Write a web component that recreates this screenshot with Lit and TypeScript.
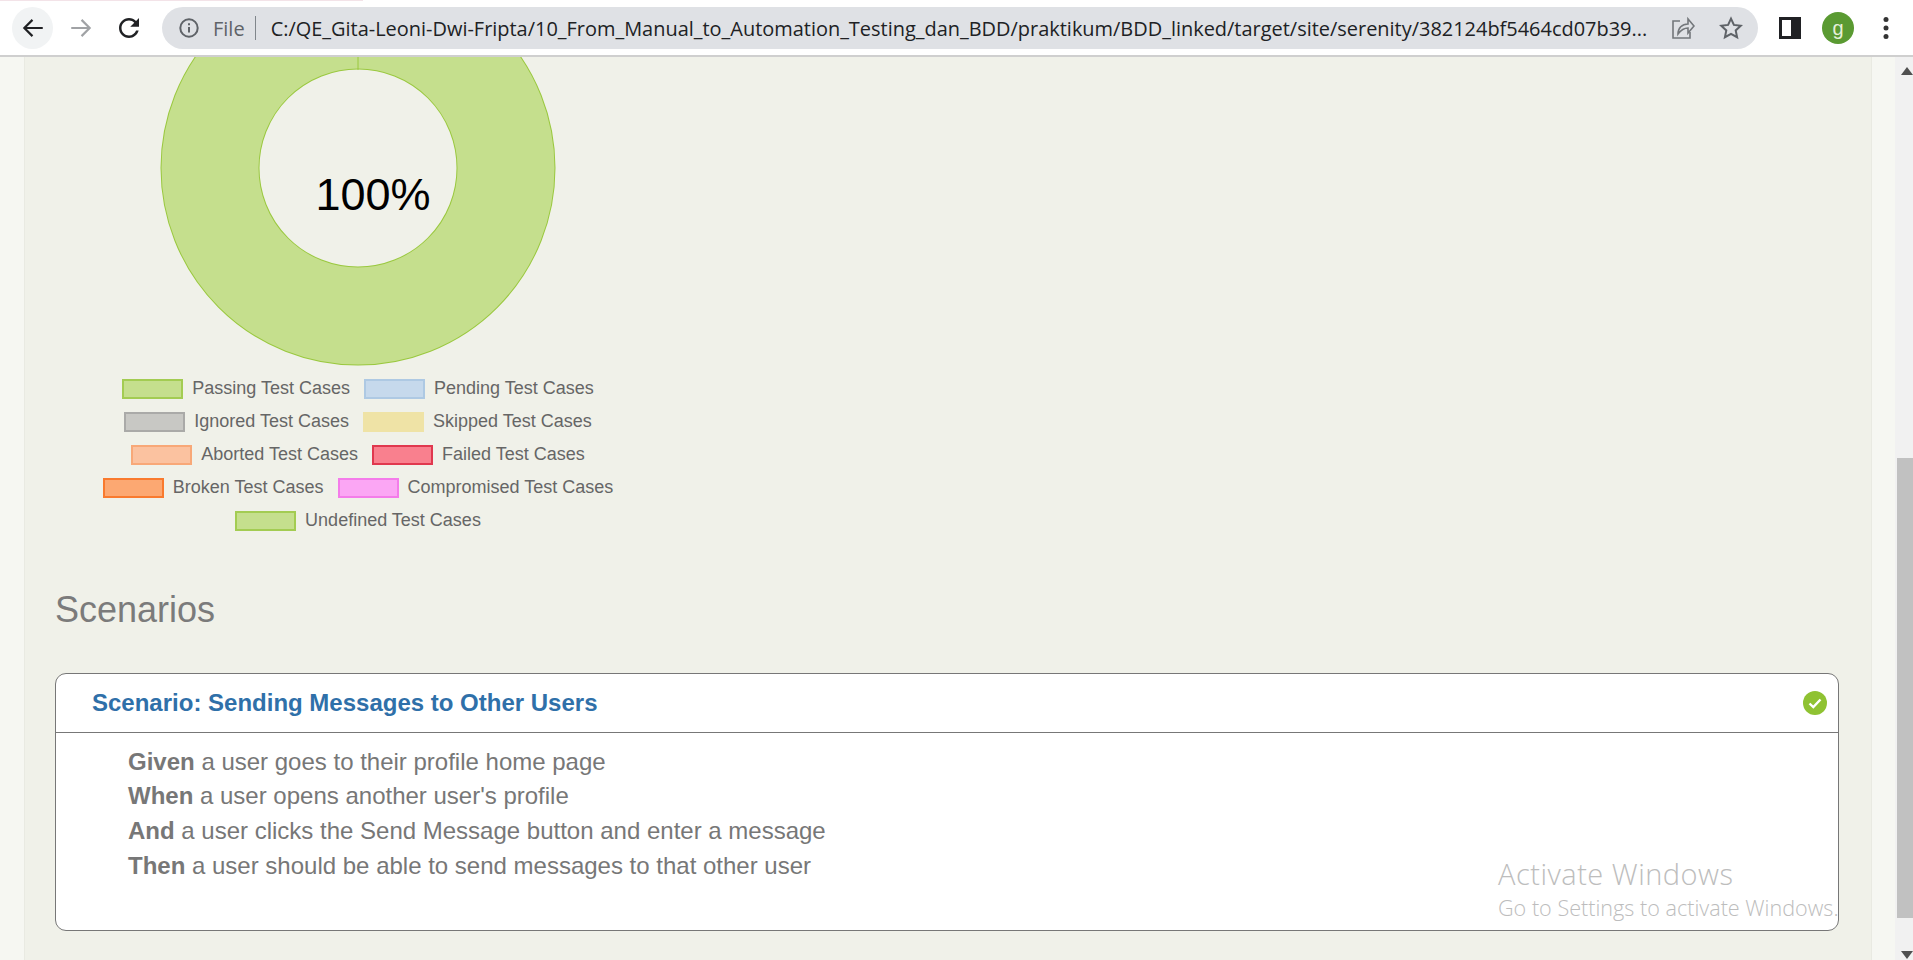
import { LitElement, css, html } from 'lit';
import { customElement } from 'lit/decorators.js';

const LEGEND = [
  [
    { label: 'Passing Test Cases', fill: '#c5df8d', line: '#a3cc52' },
    { label: 'Pending Test Cases', fill: '#c6d9ec', line: '#aec9e3' },
  ],
  [
    { label: 'Ignored Test Cases', fill: '#c8c8c4', line: '#aaaaa8' },
    { label: 'Skipped Test Cases', fill: '#efe3a6', line: '#efe3a6' },
  ],
  [
    { label: 'Aborted Test Cases', fill: '#fbc2a0', line: '#f8a878' },
    { label: 'Failed Test Cases', fill: '#f9808e', line: '#e0384e' },
  ],
  [
    { label: 'Broken Test Cases', fill: '#fca872', line: '#f97a2e' },
    { label: 'Compromised Test Cases', fill: '#fba6f4', line: '#f47cea' },
  ],
  [{ label: 'Undefined Test Cases', fill: '#c5df8d', line: '#a3cc52' }],
];

const STEPS = [
  ['Given', 'a user goes to their profile home page'],
  ['When', "a user opens another user's profile"],
  ['And', 'a user clicks the Send Message button and enter a message'],
  ['Then', 'a user should be able to send messages to that other user'],
];

const URL =
  'C:/QE_Gita-Leoni-Dwi-Fripta/10_From_Manual_to_Automation_Testing_dan_BDD/praktikum/BDD_linked/target/site/serenity/382124bf5464cd07b39...';

@customElement('app-root')
export class AppRoot extends LitElement {
  static override styles = css`
    :host {
      display: flex;
      flex-direction: column;
      position: relative;
      width: 1913px;
      height: 960px;
      overflow: hidden;
      font-family: 'Liberation Sans', Arial, sans-serif;
      background: #fff;
    }
    .tab-strip {
      width: 363px;
      height: 1px;
      background: #f3e3e8;
    }
    .toolbar {
      display: flex;
      align-items: center;
      height: 54px;
      padding-left: 12px;
      background: #fff;
      border-bottom: 2px solid #cfcfcf;
      flex: none;
    }
    .nav {
      display: flex;
      gap: 7px;
      margin-right: 13px;
    }
    .nav-btn {
      display: flex;
      align-items: center;
      justify-content: center;
      width: 41px;
      height: 42px;
      border-radius: 50%;
    }
    .nav-btn.active {
      background: #f1f3f4;
    }
    .omnibox {
      display: flex;
      align-items: center;
      width: 1596px;
      height: 42px;
      box-sizing: border-box;
      padding: 0 15px 0 17px;
      border-radius: 21px;
      background: #dfe1e5;
      font-family: 'Open Sans', sans-serif;
      font-size: 20px;
      color: #202124;
    }
    .file {
      margin-left: 14px;
      color: #5f6368;
    }
    .sep {
      width: 1px;
      height: 24px;
      margin: 0 15px 0 10px;
      background: #80868b;
    }
    .url {
      flex: 1;
      min-width: 0;
      font-size: 19.95px;
      white-space: nowrap;
    }
    .omni-icon {
      margin-left: 24px;
      flex: none;
      display: block;
    }
    .actions {
      display: flex;
      gap: 16px;
      margin-left: 16px;
    }
    .action {
      display: flex;
      align-items: center;
      justify-content: center;
      width: 32px;
      height: 32px;
    }
    .avatar {
      border-radius: 50%;
      background: #5a9a32;
      color: #e6f0d8;
      font-family: 'Liberation Sans', Arial, sans-serif;
      font-size: 20px;
      line-height: 28px;
    }
    .page {
      display: flex;
      flex: 1;
      min-height: 0;
      background: #f6f7f2;
    }
    .gutter-left {
      width: 24px;
      flex: none;
    }
    .gutter-right {
      width: 24px;
      flex: none;
      border-left: 1px solid #e9eae2;
      box-sizing: border-box;
    }
    main {
      flex: 1;
      min-width: 0;
      padding: 0 32px 0 30px;
      background: #f0f1e9;
      border-left: 1px solid #e9eae2;
      box-sizing: border-box;
    }
    .chart {
      width: 606px;
    }
    .donut {
      display: block;
    }
    .donut text {
      font-family: 'Liberation Sans', Arial, sans-serif;
      font-size: 45px;
      fill: #000;
    }
    .legend {
      display: flex;
      flex-direction: column;
      align-items: center;
      margin-top: 5px;
      color: #666;
      font-size: 18px;
    }
    .legend-row {
      display: flex;
      align-items: center;
      gap: 14px;
      height: 33px;
    }
    .legend-item {
      display: flex;
      align-items: center;
      gap: 9px;
    }
    .swatch {
      width: 61px;
      height: 20px;
      box-sizing: border-box;
      border-width: 2px;
      border-style: solid;
    }
    h2 {
      margin: 53px 0 43px;
      font-size: 36px;
      font-weight: 400;
      line-height: 1.1;
      color: #7b7b7b;
    }
    .card {
      background: #fff;
      border: 1px solid #777;
      border-radius: 11px;
    }
    .card-head {
      display: flex;
      align-items: center;
      justify-content: space-between;
      height: 58px;
      padding: 0 11px 0 36px;
      border-bottom: 1px solid #777;
    }
    .card-title {
      color: #2f70a9;
      font-size: 24px;
      font-weight: 700;
    }
    .card-body {
      padding: 12px 0 46.4px 72px;
      color: #777;
      font-size: 24px;
      line-height: 34.7px;
    }
    .scrollbar {
      display: flex;
      flex-direction: column;
      width: 18px;
      flex: none;
      background: #f1f1f1;
    }
    .arrow {
      display: block;
      margin: 10px 0 0 6px;
    }
    .thumb {
      height: 460px;
      margin: 383px 0 23px 2px;
      background: #c1c1c1;
    }
    .watermark {
      position: absolute;
      left: 1498px;
      top: 853px;
      color: #bdbdbd;
      font-family: 'Open Sans', sans-serif;
      font-weight: 300;
      pointer-events: none;
      white-space: nowrap;
    }
    .watermark div:first-child {
      font-size: 29px;
      letter-spacing: 0.5px;
      line-height: 41px;
    }
    .watermark div:last-child {
      font-size: 21.6px;
      line-height: 28px;
    }
  `;

  renderToolbar() {
    return html`<div class="tab-strip"></div>
      <div class="toolbar">
        <div class="nav">
          <div class="nav-btn active">
            <svg width="26" height="26" viewBox="0 0 24 24" fill="none" stroke="#202124" stroke-width="2">
              <path d="M21 12H4M11.5 4.5 4 12l7.5 7.5" />
            </svg>
          </div>
          <div class="nav-btn">
            <svg width="26" height="26" viewBox="0 0 24 24" fill="none" stroke="#a0a2a5" stroke-width="2">
              <path d="M3 12h17M12.5 4.5 20 12l-7.5 7.5" />
            </svg>
          </div>
          <div class="nav-btn">
            <svg width="30" height="30" viewBox="0 0 24 24" fill="#202124">
              <path d="M17.65 6.35C16.2 4.9 14.21 4 12 4c-4.42 0-7.99 3.58-7.99 8s3.57 8 7.99 8c3.73 0 6.84-2.55 7.73-6h-2.08c-.82 2.33-3.04 4-5.65 4-3.31 0-6-2.69-6-6s2.69-6 6-6c1.66 0 3.14.69 4.22 1.78L13 11h7V4l-2.35 2.35z" />
            </svg>
          </div>
        </div>
        <div class="omnibox">
          <svg width="20" height="20" viewBox="0 0 20 20" fill="none" stroke="#5f6368" stroke-width="2">
            <circle cx="10" cy="10" r="8.7" />
            <path d="M10 9v5.5M10 5.2v2" />
          </svg>
          <span class="file">File</span>
          <span class="sep"></span>
          <span class="url">${URL}</span>
          <svg class="omni-icon" width="24" height="24" viewBox="0 0 24 24" fill="none" stroke="#73777b" stroke-width="1.6">
            <path d="M9 5H2v17h17v-6" />
            <path d="M7 18c0-6 4-10 10-10V3l6 7-6 7v-5c-4 0-7 2-10 6z" />
          </svg>
          <svg class="omni-icon" width="24" height="24" viewBox="0 0 24 24" fill="none" stroke="#5f6368" stroke-width="2">
            <path d="M12 2.6l2.9 6.3 6.9.8-5.1 4.7 1.4 6.8-6.1-3.4-6.1 3.4 1.4-6.8-5.1-4.7 6.9-.8z" />
          </svg>
        </div>
        <div class="actions">
          <div class="action">
            <svg width="22" height="22" viewBox="0 0 22 22">
              <rect x="0" y="0" width="22" height="22" fill="#202124" />
              <rect x="3" y="3" width="9" height="16" fill="#fff" />
            </svg>
          </div>
          <div class="action avatar">g</div>
          <div class="action">
            <svg width="6" height="24" viewBox="0 0 6 24" fill="#333">
              <circle cx="3" cy="3.5" r="2.5" />
              <circle cx="3" cy="12" r="2.5" />
              <circle cx="3" cy="20.5" r="2.5" />
            </svg>
          </div>
        </div>
      </div>`;
  }

  renderChart() {
    return html`<div class="chart">
      <svg class="donut" width="606" height="310" viewBox="0 0 606 310">
        <circle cx="303" cy="111" r="148" fill="none" stroke="#9ac83f" stroke-width="99" />
        <circle cx="303" cy="111" r="148" fill="none" stroke="#c5df8d" stroke-width="97" />
        <line x1="303" y1="0" x2="303" y2="13" stroke="#9ac83f" stroke-width="1" />
        <text x="260.5" y="153">100%</text>
      </svg>
      <div class="legend">
        ${LEGEND.map(
          (row) => html`<div class="legend-row">
            ${row.map(
              (item) => html`<div class="legend-item">
                <span class="swatch" style="background:${item.fill};border-color:${item.line}"></span>
                <span>${item.label}</span>
              </div>`
            )}
          </div>`
        )}
      </div>
    </div>`;
  }

  override render() {
    return html`${this.renderToolbar()}
      <div class="page">
        <div class="gutter-left"></div>
        <main>
          ${this.renderChart()}
          <h2>Scenarios</h2>
          <div class="card">
            <div class="card-head">
              <span class="card-title">Scenario: Sending Messages to Other Users</span>
              <svg width="24" height="24" viewBox="0 0 24 24">
                <circle cx="12" cy="12" r="12" fill="#8fc232" />
                <path d="M6.5 12.5l3.8 3.6 7.2-7.6" fill="none" stroke="#fff" stroke-width="2.4" />
              </svg>
            </div>
            <div class="card-body">
              ${STEPS.map(([key, rest]) => html`<div><b>${key}</b> ${rest}</div>`)}
            </div>
          </div>
        </main>
        <div class="gutter-right"></div>
        <div class="scrollbar">
          <svg class="arrow" width="12" height="8" viewBox="0 0 12 8"><path d="M6 0l6 8H0z" fill="#505050" /></svg>
          <div class="thumb"></div>
          <svg class="arrow" width="12" height="8" viewBox="0 0 12 8"><path d="M0 0h12L6 8z" fill="#505050" /></svg>
        </div>
      </div>
      <div class="watermark">
        <div>Activate Windows</div>
        <div>Go to Settings to activate Windows.</div>
      </div>`;
  }
}
